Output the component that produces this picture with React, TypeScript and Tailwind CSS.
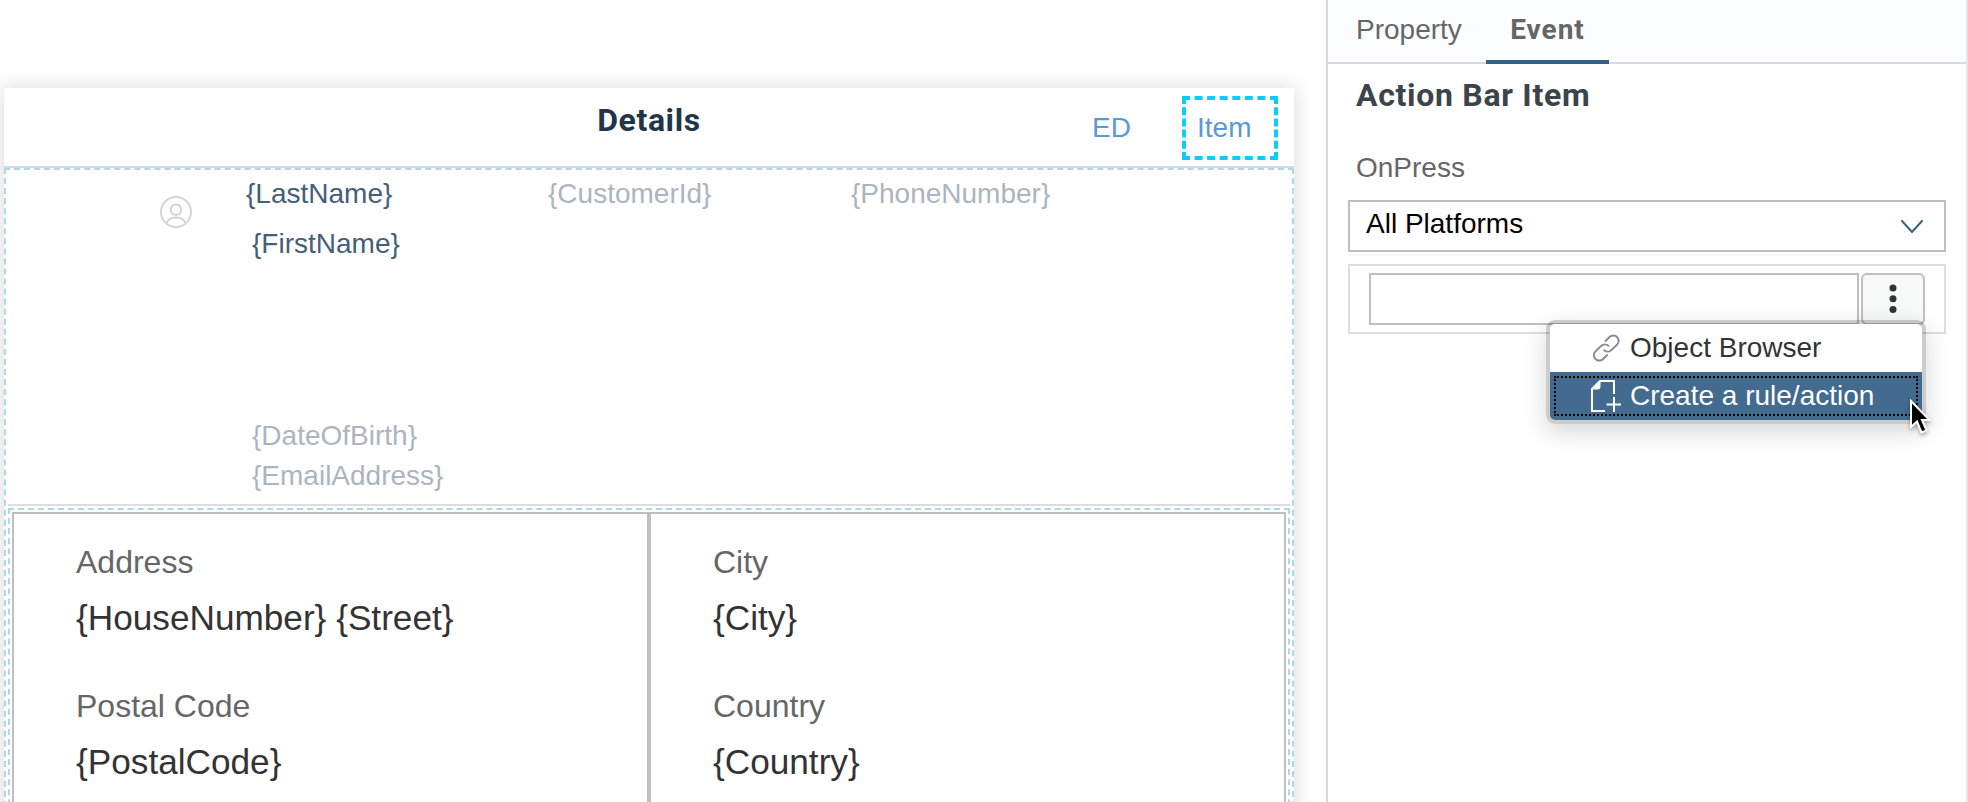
import React from "react";

function Field({ label, value }: { label: string; value: string }) {
  return (
    <div className="h-36">
      <div className="text-[32px] leading-[40px] text-[#666666]">{label}</div>
      <div className="mt-4 text-[35.2px] leading-[40px] text-[#333333] whitespace-pre">{value}</div>
    </div>
  );
}

function ObjectHeader() {
  return (
    <div className="flex h-[334px] flex-none px-1 text-[28px] leading-[32px]">
      <div className="w-[148px] flex-none pt-[25px]">
        <svg className="ml-[149px]" width="34" height="34" viewBox="0 0 34 34" fill="none" stroke="#d3d3d3" strokeWidth="2">
          <circle cx="17" cy="17" r="15" />
          <circle cx="17" cy="14.7" r="5.2" />
          <path d="M8 28.5 C8 20.5 26 20.5 26 28.5" />
        </svg>
      </div>
      <div className="ml-[88px] w-[302px] flex-none pt-2 text-[#475e79]">
        <div className="mb-[18px]">{"{LastName}"}</div>
        <div className="ml-1.5">{"{FirstName}"}</div>
        <div className="ml-1.5 mt-[160px] text-[#abb5c0]">{"{DateOfBirth}"}</div>
        <div className="ml-1.5 mt-2 text-[#abb5c0]">{"{EmailAddress}"}</div>
      </div>
      <div className="w-[303px] flex-none pt-2 text-[#abb5c0]">{"{CustomerId}"}</div>
      <div className="pt-2 text-[#abb5c0]">{"{PhoneNumber}"}</div>
    </div>
  );
}

function Preview() {
  return (
    <main className="flex w-[1326px] flex-none overflow-hidden pl-1 pt-[88px]">
      <div className="flex h-[900px] w-[1290px] flex-none flex-col bg-white shadow-[0_0_20px_rgba(0,0,0,0.16)]">
        <header className="grid h-20 flex-none grid-cols-[1fr_auto_1fr] border-b-2 border-[#cddbeb]">
          <span />
          <h1 className="pt-3 font-[Roboto,sans-serif] text-[32px] font-bold leading-[40px] tracking-[0.6px] text-[#223548]">
            Details
          </h1>
          <div className="flex items-start justify-end pr-4 pt-2 text-[28px] leading-[32px] text-[#5899da]">
            <span className="mr-[51px] mt-4">ED</span>
            <span className="h-16 w-24 border-4 border-dashed border-[#0ccbff] pl-[11px] pt-3">Item</span>
          </div>
        </header>
        <section className="flex flex-1 flex-col border-2 border-dashed border-[#add8e6]">
          <ObjectHeader />
          <div className="mx-0.5 h-0.5 flex-none bg-[#dddddd]" />
          <div className="mx-0.5 mt-0.5 flex flex-1 border-2 border-dashed border-[#add8e6] p-0.5">
            <div className="grid flex-1 grid-cols-2">
              <div className="border-2 border-[#bfbfbf] pl-[62px] pt-7">
                <Field label="Address" value="{HouseNumber} {Street}" />
                <Field label="Postal Code" value="{PostalCode}" />
              </div>
              <div className="border-2 border-[#bfbfbf] pl-[62px] pt-7">
                <Field label="City" value="{City}" />
                <Field label="Country" value="{Country}" />
              </div>
            </div>
          </div>
        </section>
      </div>
    </main>
  );
}

function ActionMenu() {
  return (
    <div className="absolute left-[196px] top-[54px] z-10 w-[380px] rounded-[9px] border-4 border-black/20 bg-clip-padding shadow-[0_8px_24px_rgba(0,0,0,0.16)] text-[28px] leading-[32px]">
      <div className="flex h-12 items-center rounded-t-[5px] bg-white pl-[42px] text-[#333333]">
        <svg className="mr-[8px]" width="30" height="28" viewBox="0 0 30 28" fill="none" stroke="#8a8a8a" strokeWidth="1.9" strokeLinecap="round">
          <path d="M13.5 7 L17.5 3 a5.3 5.3 0 0 1 7.6 7.6 L19.5 16 a5.3 5.3 0 0 1 -7.3 0.2" />
          <path d="M15.1 21 L11.1 25 a5.3 5.3 0 0 1 -7.6 -7.6 L9.1 12 a5.3 5.3 0 0 1 7.3 -0.2" />
        </svg>
        Object Browser
      </div>
      <div className="h-12 rounded-b-[5px] bg-[#426b8f] p-1 text-white">
        <div className="flex h-10 items-center border-2 border-dotted border-black pl-[33px]">
          <svg className="mr-[9px]" width="32" height="34" viewBox="0 0 32 34" fill="none" stroke="#ffffff" strokeWidth="2">
            <path d="M16 32 H3 V10 L11 2 H25 V15" />
            <path d="M3 10 L11 2 V8 Q11 10 9 10 Z" fill="#ffffff" strokeWidth="1" />
            <path d="M25 18 V33 M17.5 25.5 H32" />
          </svg>
          Create a rule/action
        </div>
      </div>
      <svg
        className="absolute left-[359px] top-[75px] drop-shadow-[0_2px_2px_rgba(0,0,0,0.35)]"
        width="26"
        height="40"
        viewBox="0 0 26 40"
      >
        <path d="M2 2 V28 L8 22.5 L12.5 33.5 L17.5 31.3 L13 21 H20.5 Z" fill="#000000" stroke="#ffffff" strokeWidth="2" />
      </svg>
    </div>
  );
}

function Inspector() {
  return (
    <aside className="flex flex-1 flex-col border-x-2 border-l-[#d9d9de] border-r-[#e5e5e5] bg-white text-[28px] leading-[32px] text-[#666666]">
      <nav className="flex h-16 flex-none border-b-2 border-[#d9d9dd] bg-[#fcfdfe]">
        <span className="ml-[28px] w-[130px] pt-3.5">Property</span>
        <span className="h-16 w-[123px] flex-none border-b-4 border-[#346187] pt-3.5 text-center font-[Roboto,sans-serif] font-bold tracking-[1px]">
          Event
        </span>
      </nav>
      <h2 className="ml-7 mt-[13px] font-[Roboto,sans-serif] text-[32px] font-bold leading-[36px] tracking-[0.7px] text-[#3b444b]">
        Action Bar Item
      </h2>
      <div className="ml-7 mt-[39px]">OnPress</div>
      <div className="ml-5 mt-4 flex h-[52px] w-[598px] items-center justify-between border-2 border-[#bfbfbf] pl-4 pr-5 text-black">
        <span className="pb-1">All Platforms</span>
        <svg className="mt-0.5" width="24" height="16" viewBox="0 0 24 16" fill="none" stroke="#346187" strokeWidth="2" strokeLinecap="round">
          <path d="M2 2 L12 13 L22 2" />
        </svg>
      </div>
      <div className="ml-5 mt-0.5 h-0.5 w-[598px] bg-[#f7f7f7]" />
      <div className="relative ml-5 mt-2 flex h-[70px] w-[598px] border-2 border-[#dddddd] pl-[19px] pt-[7px]">
        <div className="h-[52px] w-[490px] border-2 border-[#bfbfbf]" />
        <div className="ml-0.5 flex h-[52px] w-16 items-center justify-center rounded-md border-2 border-[#bfbfbf] bg-[#f7f9f9]">
          <svg width="8" height="30" viewBox="0 0 8 30" fill="#333333">
            <circle cx="4" cy="4" r="3.5" />
            <circle cx="4" cy="14.7" r="3.5" />
            <circle cx="4" cy="25.4" r="3.5" />
          </svg>
        </div>
        <ActionMenu />
      </div>
    </aside>
  );
}

export default function App() {
  return (
    <div className="flex h-[802px] w-[1968px] overflow-hidden bg-white font-['Liberation_Sans',Arial,sans-serif]">
      <Preview />
      <Inspector />
    </div>
  );
}
